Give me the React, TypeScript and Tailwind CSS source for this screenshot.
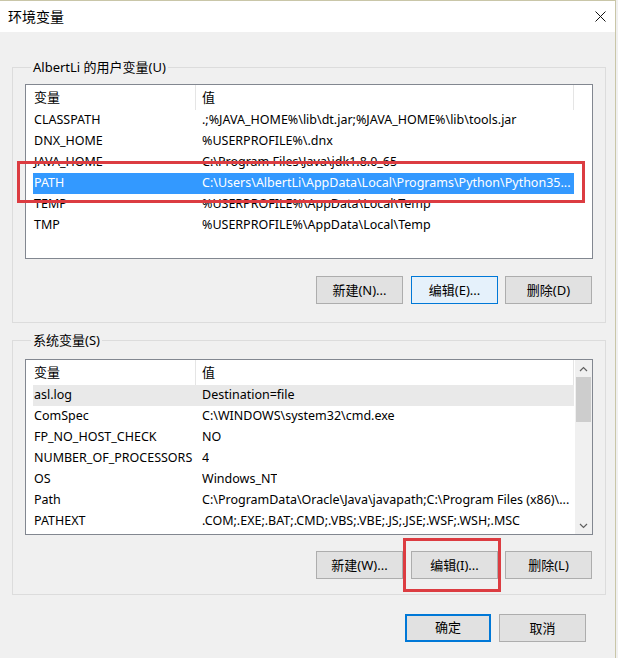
import React from 'react';

type Row = { name: string; value: string };

const userVars: Row[] = [
  { name: 'CLASSPATH', value: '.;%JAVA_HOME%\\lib\\dt.jar;%JAVA_HOME%\\lib\\tools.jar' },
  { name: 'DNX_HOME', value: '%USERPROFILE%\\.dnx' },
  { name: 'JAVA_HOME', value: 'C:\\Program Files\\Java\\jdk1.8.0_65' },
  { name: 'PATH', value: 'C:\\Users\\AlbertLi\\AppData\\Local\\Programs\\Python\\Python35...' },
  { name: 'TEMP', value: '%USERPROFILE%\\AppData\\Local\\Temp' },
  { name: 'TMP', value: '%USERPROFILE%\\AppData\\Local\\Temp' },
];

const sysVars: Row[] = [
  { name: 'asl.log', value: 'Destination=file' },
  { name: 'ComSpec', value: 'C:\\WINDOWS\\system32\\cmd.exe' },
  { name: 'FP_NO_HOST_CHECK', value: 'NO' },
  { name: 'NUMBER_OF_PROCESSORS', value: '4' },
  { name: 'OS', value: 'Windows_NT' },
  { name: 'Path', value: 'C:\\ProgramData\\Oracle\\Java\\javapath;C:\\Program Files (x86)\\...' },
  { name: 'PATHEXT', value: '.COM;.EXE;.BAT;.CMD;.VBS;.VBE;.JS;.JSE;.WSF;.WSH;.MSC' },
];

const WinButton = ({ label, focused, className = '' }: { label: string; focused?: boolean; className?: string }) => (
  <button
    className={`h-[28px] w-[87px] border text-[13px] leading-none text-black ${
      focused ? 'border-[#0078d7] bg-[#e5f1fb]' : 'border-[#adadad] bg-[#e1e1e1]'
    } ${className}`}
  >
    {label}
  </button>
);

const ListHeader = () => (
  <div className="flex h-[25px] items-center">
    <div className="flex h-full w-[170px] items-center border-r border-[#e5e5e5] pl-[8px]">变量</div>
    <div className="flex h-full w-[378px] items-center border-r border-[#e5e5e5] pl-[6px]">值</div>
  </div>
);

// row text is a touch narrower than the dialog chrome text
const ListRow = ({ row, selected, hover }: { row: Row; selected?: boolean; hover?: boolean }) => (
  <div
    className={`ml-[7px] flex h-[21px] w-[541px] items-center whitespace-nowrap text-[12.5px] ${
      selected ? 'bg-[#3399ff] text-white' : hover ? 'bg-[#e9e9e9]' : ''
    }`}
  >
    <div className="w-[169px] pl-[1px]">{row.name}</div>
    <div className="overflow-hidden">{row.value}</div>
  </div>
);

const ScrollBar = () => (
  <div className="flex w-[17px] flex-col bg-[#f0f0f0]">
    <div className="flex h-[17px] items-center justify-center">
      <svg width="9" height="6" viewBox="0 0 9 6">
        <path d="M1 5 L4.5 1.5 L8 5" fill="none" stroke="#606060" strokeWidth="1.2" />
      </svg>
    </div>
    <div className="mx-[1px] h-[45px] bg-[#cdcdcd]" />
    <div className="flex-1" />
    <div className="flex h-[17px] items-center justify-center">
      <svg width="9" height="6" viewBox="0 0 9 6">
        <path d="M1 1 L4.5 4.5 L8 1" fill="none" stroke="#606060" strokeWidth="1.2" />
      </svg>
    </div>
  </div>
);

export default function App() {
  return (
    <div
      className="relative h-[658px] w-[618px] overflow-hidden bg-[#f0f0f0] text-[13px] text-black"
      style={{ fontFamily: '"Noto Sans", "Noto Sans CJK SC", sans-serif' }}
    >
      <div className="h-[658px] w-[616px] border-r border-t border-[#c9c6a8]">
        {/* title bar */}
        <div className="flex h-[31px] items-center justify-between bg-white pl-[8px] pr-[9px]">
          <span className="text-[14px]">环境变量</span>
          <svg width="11" height="11" viewBox="0 0 11 11">
            <path d="M0.5 0.5 L10.5 10.5 M10.5 0.5 L0.5 10.5" stroke="#111" strokeWidth="1" />
          </svg>
        </div>

        {/* user variables */}
        <fieldset className="ml-[12px] mt-[25px] w-[592px] border border-[#dcdcdc] px-[12px] pb-[18px] pt-[7px]">
          <legend className="ml-[6px] px-[2px] leading-[20px]">AlbertLi 的用户变量(U)</legend>
          <div className="h-[175px] w-[568px] border border-[#828790] bg-white">
            <ListHeader />
            {userVars.map((r) => (
              <ListRow key={r.name} row={r} selected={r.name === 'PATH'} />
            ))}
          </div>
          <div className="mt-[17px] flex justify-end pr-[1px]">
            <WinButton label="新建(N)..." />
            <WinButton label="编辑(E)..." focused className="ml-[8px]" />
            <WinButton label="删除(D)" className="ml-[7px]" />
          </div>
        </fieldset>

        {/* system variables */}
        <fieldset className="ml-[12px] mt-[7px] w-[592px] border border-[#dcdcdc] px-[12px] pb-[15px] pt-[9px]">
          <legend className="ml-[6px] px-[2px] leading-[20px]">系统变量(S)</legend>
          <div className="flex h-[176px] w-[568px] border border-[#828790] bg-white">
            <div className="w-[549px]">
              <ListHeader />
              {sysVars.map((r) => (
                <ListRow key={r.name} row={r} hover={r.name === 'asl.log'} />
              ))}
            </div>
            <ScrollBar />
          </div>
          <div className="mt-[16px] flex justify-end pr-[1px]">
            <WinButton label="新建(W)..." />
            <WinButton label="编辑(I)..." className="ml-[8px]" />
            <WinButton label="删除(L)" className="ml-[7px]" />
          </div>
        </fieldset>

        {/* dialog buttons */}
        <div className="mt-[19px] flex justify-end pr-[29px]">
          <button className="h-[28px] w-[86px] border-2 border-[#0078d7] bg-[#e1e1e1] text-[13px]">确定</button>
          <WinButton label="取消" className="ml-[8px]" />
        </div>
      </div>

      {/* red annotation boxes */}
      <div className="pointer-events-none absolute left-[17px] top-[161px] h-[42px] w-[568px] border-[3px] border-[#dc3c41]" />
      <div className="pointer-events-none absolute left-[403px] top-[538px] h-[54px] w-[98px] border-[3px] border-[#dc3c41]" />
    </div>
  );
}
